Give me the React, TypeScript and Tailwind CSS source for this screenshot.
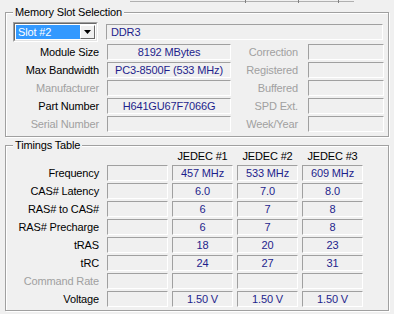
import React from 'react';

const FONT = { fontFamily: '"Liberation Sans", Arial, sans-serif' };

const Field: React.FC<{ w: string; children?: React.ReactNode; align?: 'left' | 'center' }> = ({ w, children, align = 'center' }) => (
  <div
    className={`${w} h-[16px] border border-t-[#a0a0a0] border-l-[#a0a0a0] border-b-white border-r-white flex items-center text-[#1e1e8c] leading-none ${align === 'center' ? 'justify-center' : 'justify-start pl-[4px]'}`}
  >
    {children}
  </div>
);

const GroupBox: React.FC<{ title: string; className: string; children: React.ReactNode }> = ({ title, className, children }) => (
  <div className={`relative border border-[#a0a0a0] shadow-[inset_1px_1px_0_#fff,1px_1px_0_#fff] ${className}`}>
    <span className="absolute left-[7px] -top-[8px] bg-[#f0f0f0] px-[2px] leading-[14px] text-black">{title}</span>
    {children}
  </div>
);

const slotRows = [
  { label: 'Module Size', dim: false, value: '8192 MBytes', rlabel: 'Correction' },
  { label: 'Max Bandwidth', dim: false, value: 'PC3-8500F (533 MHz)', rlabel: 'Registered' },
  { label: 'Manufacturer', dim: true, value: '', rlabel: 'Buffered' },
  { label: 'Part Number', dim: false, value: 'H641GU67F7066G', rlabel: 'SPD Ext.' },
  { label: 'Serial Number', dim: true, value: '', rlabel: 'Week/Year' },
];

const timingRows = [
  { label: 'Frequency', dim: false, v: ['457 MHz', '533 MHz', '609 MHz'] },
  { label: 'CAS# Latency', dim: false, v: ['6.0', '7.0', '8.0'] },
  { label: 'RAS# to CAS#', dim: false, v: ['6', '7', '8'] },
  { label: 'RAS# Precharge', dim: false, v: ['6', '7', '8'] },
  { label: 'tRAS', dim: false, v: ['18', '20', '23'] },
  { label: 'tRC', dim: false, v: ['24', '27', '31'] },
  { label: 'Command Rate', dim: true, v: ['', '', ''] },
  { label: 'Voltage', dim: false, v: ['1.50 V', '1.50 V', '1.50 V'] },
];

const App: React.FC = () => {
  return (
    <div className="w-[394px] h-[314px] bg-[#f0f0f0] overflow-hidden text-[11px] tracking-[-0.15px] text-black" style={FONT}>
      {/* tab strip remains */}
      <div className="relative h-[3px]">
        <div className="absolute left-[130px] right-[40px] top-[1px] h-[1px] bg-[#b0b0b0]" />
        <div className="absolute left-[245px] top-0 w-[1px] h-[3px] bg-[#808080]" />
        <div className="absolute left-[298px] top-0 w-[1px] h-[3px] bg-[#808080]" />
        <div className="absolute left-[338px] top-0 w-[1px] h-[3px] bg-[#808080]" />
      </div>

      <GroupBox title="Memory Slot Selection" className="ml-[5px] mt-[9px] w-[384px] h-[125px]">
        <div className="flex flex-col pt-[9px]">
          <div className="flex items-center h-[20px]">
            <div className="ml-[7px] w-[85px] h-[20px] border border-t-[#a0a0a0] border-l-[#a0a0a0] border-b-white border-r-white">
              <div className="w-full h-full border border-t-[#696969] border-l-[#696969] border-b-[#e3e3e3] border-r-[#e3e3e3] bg-white flex items-stretch p-[1px]">
                <div className="flex-1 bg-[#3399ff] text-white flex items-center pl-[2px] leading-none">Slot #2</div>
                <div className="w-[15px] bg-[#f0f0f0] border border-t-white border-l-white border-b-[#696969] border-r-[#696969] flex items-center justify-center">
                  <svg width="7" height="4" viewBox="0 0 7 4"><path d="M0 0h7L3.5 4z" fill="#000" /></svg>
                </div>
              </div>
            </div>
            <div className="ml-[8px]">
              <Field w="w-[277px]" align="left">DDR3</Field>
            </div>
          </div>
          <div className="flex flex-col gap-[2px] mt-[2px]">
            {slotRows.map(r => (
              <div key={r.label} className="flex items-center h-[16px]">
                <div className={`w-[93px] text-right leading-none ${r.dim ? 'text-[#a0a0a0]' : 'text-black'}`}>{r.label}</div>
                <div className="ml-[8px]"><Field w="w-[124px]">{r.value}</Field></div>
                <div className="w-[67px] text-right leading-none text-[#a0a0a0]">{r.rlabel}</div>
                <div className="ml-[10px]"><Field w="w-[76px]" /></div>
              </div>
            ))}
          </div>
        </div>
      </GroupBox>

      <GroupBox title="Timings Table" className="ml-[5px] mt-[8px] w-[384px] h-[166px]">
        <div className="flex flex-col pt-[2px]">
          <div className="flex items-center h-[16px]">
            <div className="w-[101px]" />
            <div className="flex gap-[4px]">
              <div className="w-[61px]" />
              {['JEDEC #1', 'JEDEC #2', 'JEDEC #3'].map(h => (
                <div key={h} className="w-[61px] text-center leading-none">{h}</div>
              ))}
            </div>
          </div>
          <div className="flex flex-col gap-[2px] mt-[1px]">
            {timingRows.map(r => (
              <div key={r.label} className="flex items-center h-[16px]">
                <div className={`w-[93px] text-right leading-none ${r.dim ? 'text-[#a0a0a0]' : 'text-black'}`}>{r.label}</div>
                <div className="ml-[8px] flex gap-[4px]">
                  <Field w="w-[61px]" />
                  {r.v.map((v, i) => (
                    <Field key={i} w="w-[61px]">{v}</Field>
                  ))}
                </div>
              </div>
            ))}
          </div>
        </div>
      </GroupBox>
    </div>
  );
};

export default App;
